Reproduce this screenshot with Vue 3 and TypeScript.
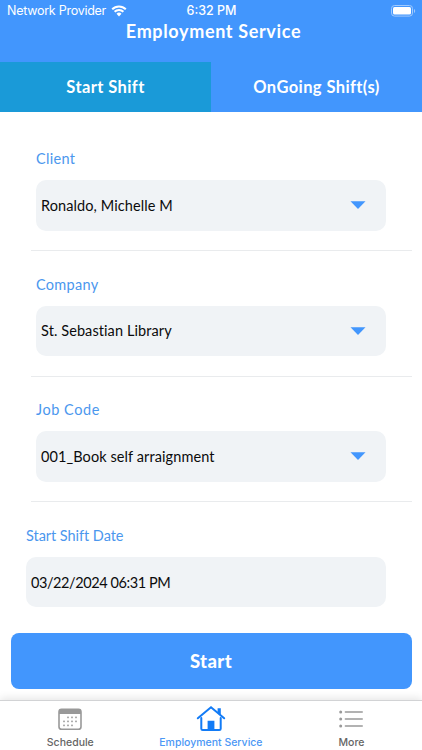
<script setup lang="ts">
import { ref } from 'vue'

interface Field {
  id: string
  label: string
  value: string
}

const activeTab = ref<'start' | 'ongoing'>('start')

const fields: Field[] = [
  { id: 'client', label: 'Client', value: 'Ronaldo, Michelle M' },
  { id: 'company', label: 'Company', value: 'St. Sebastian Library' },
  { id: 'job', label: 'Job Code', value: '001_Book self arraignment' },
]

const startDate = '03/22/2024 06:31 PM'

const calendarDots: [number, number][] = [
  [10, 9], [14, 9], [18, 9],
  [6, 13], [10, 13], [14, 13], [18, 13],
  [6, 17], [10, 17], [14, 17],
]
</script>

<template>
  <div class="screen">
    <header class="header">
      <div class="status">
        <div class="carrier">
          <span class="carrier-name">Network Provider</span>
          <svg class="wifi" viewBox="0 0 16 12">
            <path d="M1.2 4.3a9.6 9.6 0 0 1 13.6 0" />
            <path d="M3.6 6.8a6.2 6.2 0 0 1 8.8 0" />
            <path class="solid" d="M8 11.4 5.5 8.8a3.6 3.6 0 0 1 5 0z" />
          </svg>
        </div>
        <span class="time">6:32 PM</span>
        <svg class="battery" viewBox="0 0 25 12">
          <rect class="case" x="0.5" y="0.5" width="21" height="10.6" rx="3" />
          <rect class="charge" x="2" y="2" width="18" height="7.6" rx="1.5" />
          <path class="cap" d="M23 4v4c1.6-.6 1.6-3.4 0-4z" />
        </svg>
      </div>
      <h1 class="title"><span>Employment Service</span></h1>
    </header>

    <nav class="tabs">
      <button class="tab" :class="{ active: activeTab === 'start' }" @click="activeTab = 'start'">
        <span>Start Shift</span>
      </button>
      <button class="tab" :class="{ active: activeTab === 'ongoing' }" @click="activeTab = 'ongoing'">
        <span>OnGoing Shift(s)</span>
      </button>
    </nav>

    <main class="form">
      <section v-for="field in fields" :key="field.id" class="field" :class="field.id">
        <div class="label"><span>{{ field.label }}</span></div>
        <div class="box">
          <span class="value">{{ field.value }}</span>
          <svg class="caret" viewBox="0 0 16 8"><path d="M0.5 0.3h15L8 8z" /></svg>
        </div>
      </section>
      <section class="field date">
        <div class="label"><span>Start Shift Date</span></div>
        <div class="box"><span class="value">{{ startDate }}</span></div>
      </section>
      <button class="start"><span>Start</span></button>
    </main>

    <footer class="bar">
      <div class="item">
        <svg class="icon" viewBox="0 0 24 23">
          <rect class="cal-frame" x="1" y="1.3" width="22" height="20" rx="2.6" />
          <path class="cal-top" d="M1 6V3.6A2.6 2.6 0 0 1 3.6 1h16.8A2.6 2.6 0 0 1 23 3.6V6z" />
          <rect v-for="([x, y], i) in calendarDots" :key="i" class="cal-dot" :x="x - 0.8" :y="y - 0.4" width="1.6" height="1.6" />
        </svg>
        <span class="name">Schedule</span>
      </div>
      <div class="item current">
        <svg class="icon home" viewBox="0 0 30 27">
          <path class="wall" d="M5.3 13v10.7a1.4 1.4 0 0 0 1.4 1.4h16.6a1.4 1.4 0 0 0 1.4-1.4V13" />
          <path class="roof" d="M1.8 13.3 15 2.2l13.2 11.1" />
          <path class="solid" d="M21.6 3.3h3.2v7.2l-3.2-2.7zM11.6 15.8h6.8V25h-6.8z" />
        </svg>
        <span class="name">Employment Service</span>
      </div>
      <div class="item">
        <svg class="icon list" viewBox="0 0 24 18">
          <g v-for="y in [2, 9, 16]" :key="y">
            <circle cx="1.7" :cy="y" r="1.5" />
            <path :d="`M6.4 ${y}h16.8`" />
          </g>
        </svg>
        <span class="name">More</span>
      </div>
    </footer>
  </div>
</template>

<style>
body {
  margin: 0;
  background: #fff;
}
</style>

<style scoped>
.screen {
  display: flex;
  flex-direction: column;
  width: 422px;
  height: 750px;
  overflow: hidden;
  background: #fff;
  font-family: Lato, "Open Sans", sans-serif;
  font-variant-ligatures: none;
}

button {
  padding: 0;
  border: 0;
  font-family: inherit;
}

span {
  white-space: nowrap;
}

.header {
  box-sizing: border-box;
  height: 61.5px;
  background: #4296fd;
  color: #fff;
}

.status {
  display: grid;
  grid-template-columns: 1fr auto 1fr;
  align-items: center;
  height: 21px;
  padding: 0 6px 0 7px;
  font: 400 12.5px/21px Inter, sans-serif;
}

.carrier {
  display: flex;
  align-items: center;
  gap: 5px;
}

.carrier-name {
  letter-spacing: -0.26px;
}

.wifi {
  width: 16px;
  height: 12px;
  fill: none;
  stroke: #fff;
  stroke-width: 2;
}

.wifi .solid {
  fill: #fff;
  stroke: none;
}

.time {
  font-weight: 500;
}

.battery {
  justify-self: end;
  width: 25px;
  height: 12px;
}

.case {
  fill: none;
  stroke: #a0cafe;
}

.charge {
  fill: #fff;
}

.cap {
  fill: #a0cafe;
}

.title {
  margin: 0;
  padding-left: 5px;
  text-align: center;
  font-size: 18px;
  font-weight: 700;
  line-height: 20px;
  letter-spacing: 0.65px;
}

.tabs {
  display: grid;
  grid-template-columns: 1fr 1fr;
  height: 50.5px;
}

.tab {
  background: #4296fd;
  color: #fff;
  font-size: 16.5px;
  font-weight: 700;
  letter-spacing: 0.4px;
}

.tab.active {
  background: #1a9ad8;
}

.form {
  display: flex;
  flex-direction: column;
  height: 587.5px;
  padding: 13px 10.5px 0 30.5px;
  box-sizing: border-box;
}

.field {
  box-sizing: border-box;
  flex: none;
  height: 125.6px;
  padding: 24px 25.5px 0 5.5px;
}

.field:not(.date) {
  height: 126px;
  border-bottom: 1.5px solid #e9ebed;
  margin-bottom: -0.4px;
}

.label {
  height: 31px;
  color: #4b97ee;
  font-size: 14.5px;
  line-height: 20px;
  letter-spacing: 0.3px;
}

.job .label {
  letter-spacing: 0.55px;
}

.date .label {
  letter-spacing: -0.05px;
}

.box {
  display: flex;
  align-items: center;
  justify-content: space-between;
  box-sizing: border-box;
  height: 50.5px;
  padding: 0 20px 0 5px;
  border-radius: 10px;
  background: #f0f3f6;
  color: #0b0b0c;
  font-size: 14.5px;
  letter-spacing: 0.09px;
}

.date .value {
  letter-spacing: -0.42px;
}

.caret {
  width: 16px;
  height: 8px;
  fill: #4296fd;
}

.date {
  height: 105px;
  margin-left: -10px;
}

.start {
  flex: none;
  height: 56px;
  margin: 26.5px 0 0 -20px;
  border-radius: 8px;
  background: #4296fd;
  color: #fff;
  font-size: 18.5px;
  font-weight: 900;
  letter-spacing: 0.4px;
}

.bar {
  display: grid;
  grid-template-columns: 140.6px 140.6px 140.6px;
  flex: 1;
  border-top: 1px solid #d2d3d5;
  box-shadow: 0 -2px 8px rgba(0, 0, 0, 0.1);
  background: #fff;
}

.item {
  display: flex;
  flex-direction: column;
  align-items: center;
  justify-content: space-between;
  padding: 4px 0 0;
  color: #656565;
  font: 500 10.5px/14px Inter, sans-serif;
}

.current {
  color: #4b97f5;
}

.icon {
  width: 24px;
  height: 23px;
  margin-top: 3px;
}

.cal-frame {
  fill: none;
  stroke: #999;
  stroke-width: 1.6;
}

.cal-top,
.cal-dot {
  fill: #999;
}

.home {
  width: 30px;
  height: 27px;
  margin-top: 0;
}

.wall,
.roof {
  fill: none;
  stroke: #127bf6;
  stroke-width: 2;
  stroke-linecap: round;
}

.home .solid {
  fill: #127bf6;
}

.list {
  height: 18px;
  margin-top: 5px;
  fill: #999;
  stroke: none;
}

.list path {
  stroke: #999;
  stroke-width: 1.6;
  stroke-linecap: round;
}
</style>
